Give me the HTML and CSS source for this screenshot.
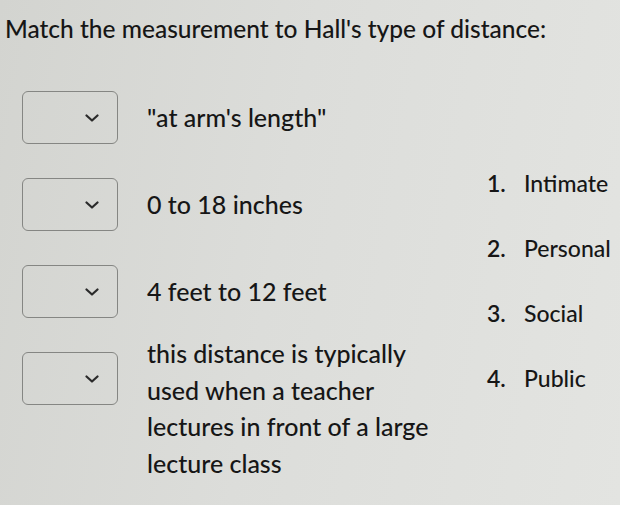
FILE: index.html
```html
<!DOCTYPE html>
<html lang="en">
<head>
  <meta charset="UTF-8">
  <title>Match the measurement</title>
  <link rel="stylesheet" href="styles.css">
</head>
<body>
  <h1 class="question">Match the measurement to Hall's type of distance:</h1>
  <div class="matching">
    <div class="prompts">
      <div class="row">
        <div class="select"><svg class="chevron" viewBox="0 0 14 8"><path d="M1.5 1.5 L7 6.5 L12.5 1.5"/></svg></div>
        <p class="prompt">"at arm's length"</p>
      </div>
      <div class="row">
        <div class="select"><svg class="chevron" viewBox="0 0 14 8"><path d="M1.5 1.5 L7 6.5 L12.5 1.5"/></svg></div>
        <p class="prompt">0 to 18 inches</p>
      </div>
      <div class="row">
        <div class="select"><svg class="chevron" viewBox="0 0 14 8"><path d="M1.5 1.5 L7 6.5 L12.5 1.5"/></svg></div>
        <p class="prompt">4 feet to 12 feet</p>
      </div>
      <div class="row row-long">
        <div class="select"><svg class="chevron" viewBox="0 0 14 8"><path d="M1.5 1.5 L7 6.5 L12.5 1.5"/></svg></div>
        <p class="prompt">this distance is typically<br>used when a teacher<br>lectures in front of a large<br>lecture class</p>
      </div>
    </div>
    <ol class="answers">
      <li><span class="num">1.</span>Intimate</li>
      <li><span class="num">2.</span>Personal</li>
      <li><span class="num">3.</span>Social</li>
      <li><span class="num">4.</span>Public</li>
    </ol>
  </div>
</body>
</html>
```

FILE: styles.css
```css
body {
  margin: 0;
  padding: 0 0 0 5px;
  height: 505px;
  overflow: hidden;
  font-family: Lato, "Open Sans", sans-serif;
  font-weight: 500;
  color: #161616;
  background: linear-gradient(100deg, #d3d4d0 0%, #dcddda 45%, #e3e4e1 100%);
}
.question {
  margin: 0;
  padding-top: 14px;
  font-size: 24.5px;
  font-weight: 500;
  line-height: 30px;
}
.matching {
  display: flex;
}
.prompts {
  display: flex;
  flex-direction: column;
  gap: 34px;
  padding-top: 47px;
  padding-left: 17px;
  width: 460px;
}
.row {
  display: flex;
  align-items: center;
  gap: 29px;
  height: 53px;
}
.row-long {
  align-items: flex-start;
  height: auto;
  margin-top: -17px;
}
.row-long .select {
  margin-top: 17px;
}
.select {
  flex: none;
  width: 96px;
  height: 53px;
  box-sizing: border-box;
  border: 1.5px solid #858683;
  border-radius: 6px;
  display: flex;
  align-items: center;
  justify-content: flex-end;
  padding-right: 18px;
}
.chevron {
  width: 14px;
  height: 8px;
  fill: none;
  stroke: #2a2a2a;
  stroke-width: 2.2;
  stroke-linecap: round;
  stroke-linejoin: round;
}
.prompt {
  margin: 0;
  font-size: 25px;
  line-height: 36.5px;
}
.answers {
  list-style: none;
  margin: 0;
  padding: 0;
  padding-top: 126px;
  display: flex;
  flex-direction: column;
  gap: 39px;
  font-size: 23px;
  line-height: 26px;
}
.answers li {
  display: flex;
  margin-left: 5px;
}
.num {
  width: 37px;
  font-weight: 600;
}
```
